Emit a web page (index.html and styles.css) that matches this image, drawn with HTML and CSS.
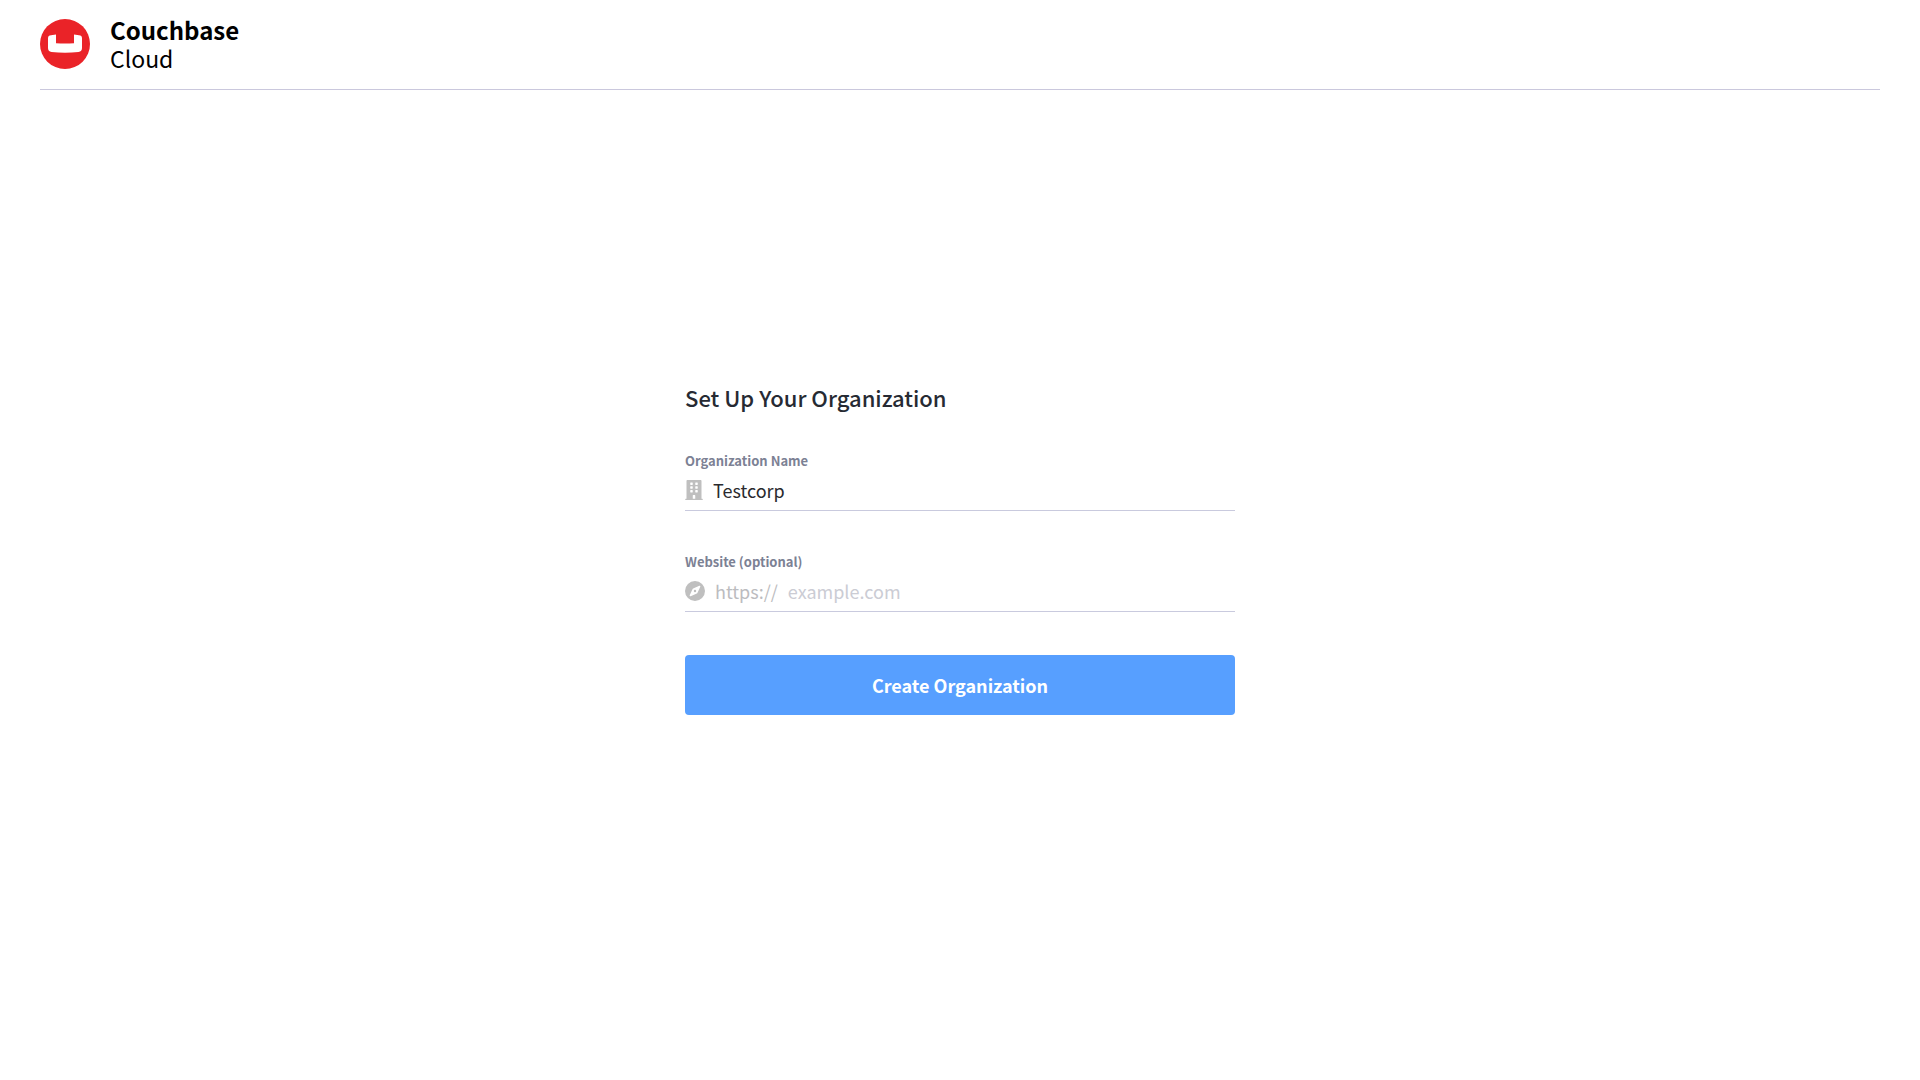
FILE: index.html
```html
<!DOCTYPE html>
<html lang="en">
<head>
  <meta charset="utf-8">
  <meta name="viewport" content="width=device-width, initial-scale=1">
  <title>Couchbase Cloud</title>
  <link rel="stylesheet" href="styles.css">
</head>
<body>
  <header class="header">
    <svg class="logo" viewBox="0 0 50 50" aria-hidden="true">
      <circle cx="25" cy="25" r="25" fill="#ea2328"/>
      <path d="M8 19.500Q8 16.300 11 16.300L16 15.600V24.200Q25 25 34 24.200V15.600L39 16.300Q42 16.300 42 19.500V29Q42 32.600 38.500 33Q25 34.600 11.500 33Q8 32.600 8 29Z" fill="#fff"/>
    </svg>
    <div class="brand">
      <span class="brand-name">Couchbase</span>
      <span class="brand-product">Cloud</span>
    </div>
  </header>
  <main class="main">
    <form class="form">
      <h1 class="title">Set Up Your Organization</h1>
      <div class="field">
        <label class="label" for="org-name">Organization Name</label>
        <div class="control">
          <svg class="icon-building" viewBox="0 0 448 512" aria-hidden="true">
            <path d="M436 480h-20V24c0-13.255-10.745-24-24-24H56C42.745 0 32 10.745 32 24v456H12c-6.627 0-12 5.373-12 12v20h448v-20c0-6.627-5.373-12-12-12zM128 76c0-6.627 5.373-12 12-12h40c6.627 0 12 5.373 12 12v40c0 6.627-5.373 12-12 12h-40c-6.627 0-12-5.373-12-12V76zm0 96c0-6.627 5.373-12 12-12h40c6.627 0 12 5.373 12 12v40c0 6.627-5.373 12-12 12h-40c-6.627 0-12-5.373-12-12v-40zm52 148h-40c-6.627 0-12-5.373-12-12v-40c0-6.627 5.373-12 12-12h40c6.627 0 12 5.373 12 12v40c0 6.627-5.373 12-12 12zm76 160h-64v-84c0-6.627 5.373-12 12-12h40c6.627 0 12 5.373 12 12v84zm64-172c0 6.627-5.373 12-12 12h-40c-6.627 0-12-5.373-12-12v-40c0-6.627 5.373-12 12-12h40c6.627 0 12 5.373 12 12v40zm0-96c0 6.627-5.373 12-12 12h-40c-6.627 0-12-5.373-12-12v-40c0-6.627 5.373-12 12-12h40c6.627 0 12 5.373 12 12v40zm0-96c0 6.627-5.373 12-12 12h-40c-6.627 0-12-5.373-12-12V76c0-6.627 5.373-12 12-12h40c6.627 0 12 5.373 12 12v40z"/>
          </svg>
          <input class="input" id="org-name" type="text" value="Testcorp">
        </div>
      </div>
      <div class="field">
        <label class="label" for="website">Website (optional)</label>
        <div class="control">
          <svg class="icon-compass" viewBox="0 0 20 20" aria-hidden="true">
            <path fill-rule="evenodd" d="M10 0A10 10 0 1 1 10 20A10 10 0 1 1 10 0ZM14.300 4.700L8.200 7.500Q7.700 7.700 7.500 8.200L4.700 14.300Q4.500 15.500 5.700 15.300L11.800 12.500Q12.300 12.300 12.500 11.800L15.300 5.700Q15.500 4.500 14.300 4.700ZM10 8.800A1.200 1.200 0 1 0 10 11.200A1.200 1.200 0 1 0 10 8.800Z"/>
          </svg>
          <span class="prefix">https://</span>
          <input class="input" id="website" type="text" placeholder="example.com">
        </div>
      </div>
      <button class="submit" type="submit">Create Organization</button>
    </form>
  </main>
</body>
</html>
```
FILE: styles.css
```css
* {
  box-sizing: border-box;
}

body {
  margin: 0;
  background: #fff;
  color: #262a33;
  font-family: "Source Sans Pro", "Noto Sans CJK SC", "Noto Sans", sans-serif;
}

.header {
  display: flex;
  align-items: center;
  gap: 20px;
  height: 90px;
  margin: 0 40px;
  padding-bottom: 2px;
  border-bottom: 1px solid #cac8dd;
}

.logo {
  width: 50px;
  height: 50px;
}

.brand {
  display: flex;
  flex-direction: column;
  color: #000;
  font-size: 24px;
  line-height: 28px;
}

.brand-name {
  font-weight: 700;
}

.brand-product {
  font-size: 23px;
}

.main {
  display: flex;
  justify-content: center;
  padding: 292px 40px 40px;
}

.form {
  display: flex;
  flex-direction: column;
  gap: 43px;
  width: 100%;
  max-width: 550px;
}

.title {
  margin: 0 0 -2px;
  font-size: 22px;
  font-weight: 500;
  line-height: 30px;
}

.label {
  display: block;
  color: #7c8194;
  font-size: 13px;
  font-weight: 700;
  line-height: 16px;
}

.control {
  display: flex;
  align-items: center;
  gap: 10px;
  height: 42px;
  border-bottom: 1px solid #c9cade;
}

.icon-building {
  width: 18px;
  height: 20px;
  fill: #bfbfbf;
}

.icon-compass {
  width: 20px;
  height: 20px;
  fill: #bfbfbf;
}

.prefix,
.input {
  font-size: 18px;
  font-weight: 400;
  line-height: 26px;
}

.prefix {
  color: #bcbcc0;
}

.input {
  flex: 1;
  min-width: 0;
  padding: 0;
  border: 0;
  outline: 0;
  background: none;
  color: #2a2a2e;
  font-family: inherit;
}

.input::placeholder {
  color: #cbccd4;
}

.submit {
  height: 60px;
  border: 0;
  border-radius: 4px;
  background: #579fff;
  color: #fff;
  font-family: inherit;
  font-size: 18px;
  font-weight: 700;
}
```
